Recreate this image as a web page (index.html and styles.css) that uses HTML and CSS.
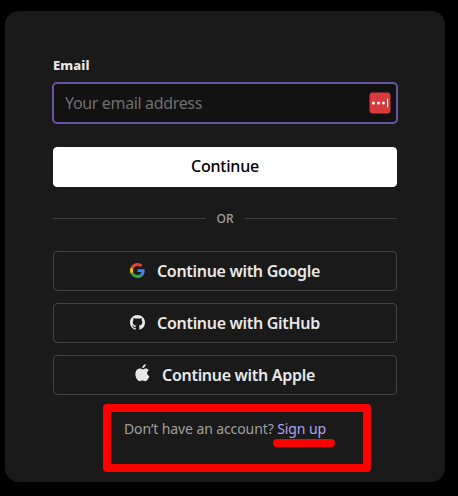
FILE: index.html
```html
<!DOCTYPE html>
<html lang="en">
<head>
    <meta charset="UTF-8">
    <meta name="viewport" content="width=device-width, initial-scale=1.0">
    <title>Sign in</title>
    <link rel="stylesheet" href="styles.css">
</head>
<body>
    <main class="card">
        <form class="login-form">
            <label class="label" for="email">Email</label>
            <div class="input-box">
                <input id="email" class="input" type="email" placeholder="Your email address">
                <svg class="manager-icon" viewBox="0 0 22 22">
                    <rect x="0.5" y="0.5" width="21" height="21" rx="3" fill="#d93a3c"/>
                    <circle cx="4.4" cy="10.9" r="1.5" fill="#fff"/>
                    <circle cx="9.5" cy="10.9" r="1.5" fill="#fff"/>
                    <circle cx="14.5" cy="10.9" r="1.5" fill="#fff"/>
                    <rect x="18" y="6.7" width="1.2" height="8.6" fill="#fff"/>
                </svg>
            </div>
            <button class="btn btn-primary" type="button">Continue</button>
        </form>

        <div class="divider"><span>OR</span></div>

        <div class="providers">
            <button class="btn btn-google" type="button">
                <svg class="icon" viewBox="0 0 48 48">
                    <path fill="#EA4335" d="M24 9.5c3.54 0 6.71 1.22 9.21 3.6l6.85-6.85C35.9 2.38 30.47 0 24 0 14.62 0 6.51 5.38 2.56 13.22l7.98 6.19C12.43 13.72 17.74 9.5 24 9.5z"/>
                    <path fill="#4285F4" d="M46.98 24.55c0-1.57-.15-3.09-.38-4.55H24v9.02h12.94c-.58 2.96-2.26 5.48-4.78 7.18l7.73 6c4.51-4.18 7.09-10.36 7.09-17.65z"/>
                    <path fill="#FBBC05" d="M10.53 28.59c-.48-1.45-.76-2.99-.76-4.59s.27-3.14.76-4.59l-7.98-6.19C.92 16.46 0 20.12 0 24c0 3.88.92 7.54 2.56 10.78l7.97-6.19z"/>
                    <path fill="#34A853" d="M24 48c6.48 0 11.93-2.13 15.89-5.81l-7.73-6c-2.15 1.45-4.92 2.3-8.16 2.3-6.26 0-11.57-4.22-13.47-9.91l-7.98 6.19C6.51 42.62 14.62 48 24 48z"/>
                </svg>
                <span>Continue with Google</span>
            </button>
            <button class="btn btn-github" type="button">
                <svg class="icon" viewBox="0 0 16 16">
                    <path fill="currentColor" d="M8 0C3.58 0 0 3.58 0 8c0 3.54 2.29 6.53 5.47 7.59.4.07.55-.17.55-.38 0-.19-.01-.82-.01-1.49-2.01.37-2.53-.49-2.69-.94-.09-.23-.48-.94-.82-1.13-.28-.15-.68-.52-.01-.53.63-.01 1.08.58 1.23.82.72 1.21 1.87.87 2.33.66.07-.52.28-.87.51-1.07-1.78-.2-3.64-.89-3.64-3.95 0-.87.31-1.59.82-2.15-.08-.2-.36-1.02.08-2.12 0 0 .67-.21 2.2.82.64-.18 1.32-.27 2-.27s1.36.09 2 .27c1.53-1.04 2.2-.82 2.2-.82.44 1.1.16 1.92.08 2.12.51.56.82 1.27.82 2.15 0 3.07-1.87 3.75-3.65 3.95.29.25.54.73.54 1.48 0 1.07-.01 1.93-.01 2.2 0 .21.15.46.55.38A8.01 8.01 0 0 0 16 8c0-4.42-3.58-8-8-8z"/>
                </svg>
                <span>Continue with GitHub</span>
            </button>
            <button class="btn btn-apple" type="button">
                <svg class="icon" viewBox="0 0 14 18">
                    <path fill="currentColor" d="M10.2 0c.1 1-.3 2-.9 2.8-.6.8-1.6 1.3-2.5 1.2-.1-1 .4-2 .9-2.6C8.3.6 9.300.1 10.200 0zM13.300 6.200c-1.100.7-1.700 1.600-1.700 2.900 0 1.500.9 2.600 2.200 3.100-.3 1-.8 1.900-1.300 2.700-.8 1.200-1.600 2.300-2.900 2.300-1.200 0-1.500-.7-2.700-.7-1.300 0-1.700.7-2.700.7-1.200 0-2.100-1.100-2.900-2.200C-.3 12.700-.6 9 .6 6.900 1.400 5.500 2.700 4.600 4 4.600c1.300 0 2 .7 3.100.7 1 0 1.900-.8 3.300-.8 1.100 0 2.200.6 2.900 1.700z"/>
                </svg>
                <span>Continue with Apple</span>
            </button>
        </div>

        <p class="signup"><span class="signup-text">Don’t have an account?</span> <a class="signup-link" href="#">Sign up</a></p>

        <!-- Callout around the sign up link -->
        <div class="callout"></div>
        <div class="callout-line"></div>
    </main>
</body>
</html>
```
FILE: styles.css
```css
* {
    box-sizing: border-box;
}
body {
    margin: 0;
    padding: 11px 13px 14px 5px;
    background-color: #000;
    font-family: "Noto Sans", "Open Sans", sans-serif;
    color: #e8e8e8;
}
.card {
    position: relative;
    width: 440px;
    height: 471px;
    padding: 44px 48px 0;
    background-color: #1a1a1a;
    border-radius: 14px;
}
.login-form {
    display: flex;
    flex-direction: column;
}
.label {
    height: 20px;
    margin-bottom: 7px;
    font-size: 13px;
    font-weight: 800;
    line-height: 20px;
    letter-spacing: 0.1px;
}
.input-box {
    display: flex;
    align-items: center;
    height: 42px;
    margin: 0 -1px 23px;
    padding: 0 5px 0 11px;
    background-color: #121212;
    border: 2px solid #6654a5;
    border-radius: 5px;
}
.input {
    flex: 1;
    min-width: 0;
    height: 36px;
    padding: 0;
    background: none;
    border: none;
    outline: none;
    color: #e8e8e8;
    font-family: inherit;
    font-size: 16px;
    letter-spacing: -0.35px;
}
.input::placeholder {
    color: #6f6f6f;
}
.manager-icon {
    width: 22px;
    height: 22px;
}
.btn {
    display: flex;
    align-items: center;
    justify-content: center;
    height: 40px;
    padding: 0 0 1px;
    background: none;
    border: 1px solid #444;
    border-radius: 4px;
    color: #e8e8e8;
    font-family: inherit;
    font-size: 16px;
    font-weight: 600;
    letter-spacing: -0.3px;
    white-space: nowrap;
}
.btn-primary {
    padding-bottom: 2px;
    background-color: #fff;
    border-color: #fff;
    color: #000;
    font-weight: 500;
    letter-spacing: -0.2px;
}
.divider {
    display: flex;
    align-items: center;
    gap: 11px;
    height: 15px;
    margin: 24px 0 25px;
    color: #a0a0a0;
    font-size: 12px;
    font-weight: 500;
    line-height: 15px;
}
.divider::before,
.divider::after {
    content: "";
    flex: 1;
    height: 1px;
    background-color: #3e3e3e;
}
.providers {
    display: flex;
    flex-direction: column;
    gap: 12px;
}
.icon {
    width: 15px;
    height: 15px;
    margin-right: 12px;
}
.btn-apple .icon {
    width: 15px;
    height: 18px;
    margin-bottom: 3px;
}
.signup {
    height: 20px;
    margin: 24px 0 0;
    padding-left: 71px;
    color: #a0a0a0;
    font-size: 14px;
    line-height: 20px;
    letter-spacing: -0.1px;
    white-space: nowrap;
}
.signup-link {
    color: #b4a2f0;
    text-decoration: none;
}
.callout {
    position: absolute;
    left: 98px;
    top: 393px;
    width: 268px;
    height: 68px;
    border: 8px solid #f00;
    border-radius: 4px;
}
.callout-line {
    position: absolute;
    left: 268px;
    top: 428px;
    width: 62px;
    height: 8px;
    background-color: #f00;
    border-radius: 4px;
}
```
